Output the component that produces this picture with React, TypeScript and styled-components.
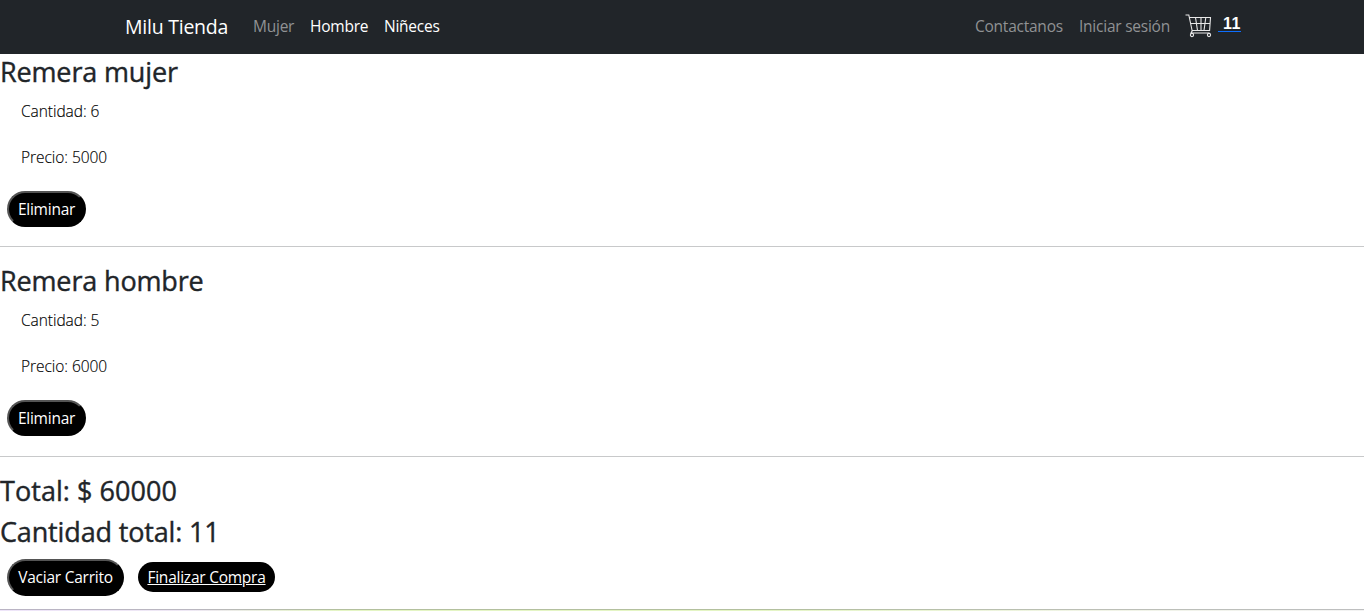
import React from "react";
import styled, { createGlobalStyle } from "styled-components";

const Global = createGlobalStyle`
  * { box-sizing: border-box; }
  html, body { margin: 0; overflow: hidden; }
  body { background: #fff; color: #212529; font: 400 15.5px/24px "Open Sans", "Noto Sans", sans-serif; letter-spacing: -0.24px; }
`;
const Page = styled.div`height: 611px; display: flex; flex-direction: column; overflow: hidden;`;
const Navbar = styled.nav`
  height: 54px; flex: none; display: flex; align-items: center; padding: 0 123px 2px 125px; background: #212529;
`;
const Brand = styled.a`width: 104px; margin-right: 16px; padding-top: 1px; font-size: 19.5px; line-height: 30px; color: #fff; white-space: nowrap;`;
const NavLinks = styled.div`display: flex; &:last-child { margin-left: auto; }`;
const NavLink = styled.a<{ $w: number; $active?: boolean }>`
  width: ${p => p.$w + 16}px; padding: 0 8px; white-space: nowrap;
  color: ${p => (p.$active ? "#fff" : "#909294")};
`;
const Cart = styled.a`display: flex; align-items: flex-start; width: 63px; height: 24px; padding-left: 7px;`;
const Count = styled.span`
  width: 23px; height: 17px; margin: 1px 0 0 6px; padding-left: 5px; border-bottom: 1px solid #0d6efd;
  color: #fff; font: 700 16px/18px "Liberation Sans", Arial, sans-serif; letter-spacing: 0.6px;
`;
const Item = styled.section`height: 193px; flex: none; border-bottom: 1px solid #c8c9ca; & + & { height: 210px; padding-top: 16px; }`;
const Title = styled.h3<{ $ls?: number }>`
  margin: 0 0 8px; font-size: 27px; line-height: 35px; height: 33.6px; font-weight: 500; white-space: nowrap;
  letter-spacing: ${p => p.$ls ?? -0.15}px; -webkit-text-stroke: 0.4px currentColor;
`;
const Detail = styled.p`
  margin: 0 0 22px 21px; padding-top: 3px; height: 24px; line-height: 24px; font-weight: 300;
  letter-spacing: -0.05px; white-space: nowrap; color: #000; -webkit-text-stroke: 0.15px currentColor;
`;
const Button = styled.button<{ $w: number }>`
  display: block; width: ${p => p.$w}px; height: 36.4px; margin: 25px 0 0 7px; padding: 0; border: 2px outset #000;
  border-radius: 20px; background: #000; color: #fff; font: inherit; letter-spacing: inherit; white-space: nowrap;
`;
const Totals = styled.section`padding-top: 16px; ${Title} { height: 33px; }`;
const Actions = styled.div`display: flex; align-items: flex-start; margin-top: 12px; button { height: 37px; margin-top: 0; padding-bottom: 1px; }`;
const Finish = styled.a`
  width: 137px; height: 30px; margin: 3px 0 0 14px; border-radius: 20px; background: #000; color: #fff;
  line-height: 30px; text-align: center; text-decoration: underline; white-space: nowrap;
`;
const Footer = styled.footer`
  height: 2px; margin-top: auto; flex: none; border-top: 1px solid rgba(33,37,41,.25);
  background: linear-gradient(90deg, #eee5f9 0%, #eee8f4 14%, #e4f5c4 25%, #e4f5c4 55%, #f0f3e6 80%, #f3f3f3 100%) border-box;
`;
const CartIcon = () => (
  <svg width="27" height="24" viewBox="0 0 27 24" fill="none" stroke="#e8e8e8" strokeWidth="1.1">
    <path d="M0.5 1H3.8L7.3 17.5M4.7 3.5H25.5L24.6 16.5H7M5.8 9.5H25M10.5 3.5L12.5 16.5M16 3.5V16.5M20.8 3.5L19 16.5M7.3 16.5L6 19H24.5" />
    <circle cx="7" cy="21" r="1.6" /><circle cx="24" cy="21" r="1.6" />
  </svg>
);

const items = [
  { name: "Remera mujer", qty: 6, price: 5000 },
  { name: "Remera hombre", qty: 5, price: 6000 },
];

export default function App() {
  return (
    <Page>
      <Global />
      <Navbar>
        <Brand>Milu Tienda</Brand>
        <NavLinks>
          <NavLink $w={41}>Mujer</NavLink>
          <NavLink $w={58} $active>Hombre</NavLink>
          <NavLink $w={56} $active>Niñeces</NavLink>
        </NavLinks>
        <NavLinks>
          <NavLink $w={88}>Contactanos</NavLink>
          <NavLink $w={91}>Iniciar sesión</NavLink>
          <Cart><CartIcon /><Count>11</Count></Cart>
        </NavLinks>
      </Navbar>
      {items.map(i => (
        <Item key={i.name}>
          <Title>{i.name}</Title>
          <Detail>Cantidad: {i.qty}</Detail>
          <Detail>Precio: {i.price}</Detail>
          <Button $w={79}>Eliminar</Button>
        </Item>
      ))}
      <Totals>
        <Title $ls={0.05}>Total: $ 60000</Title>
        <Title>Cantidad total: 11</Title>
        <Actions><Button $w={117}>Vaciar Carrito</Button><Finish>Finalizar Compra</Finish></Actions>
      </Totals>
      <Footer />
    </Page>
  );
}
